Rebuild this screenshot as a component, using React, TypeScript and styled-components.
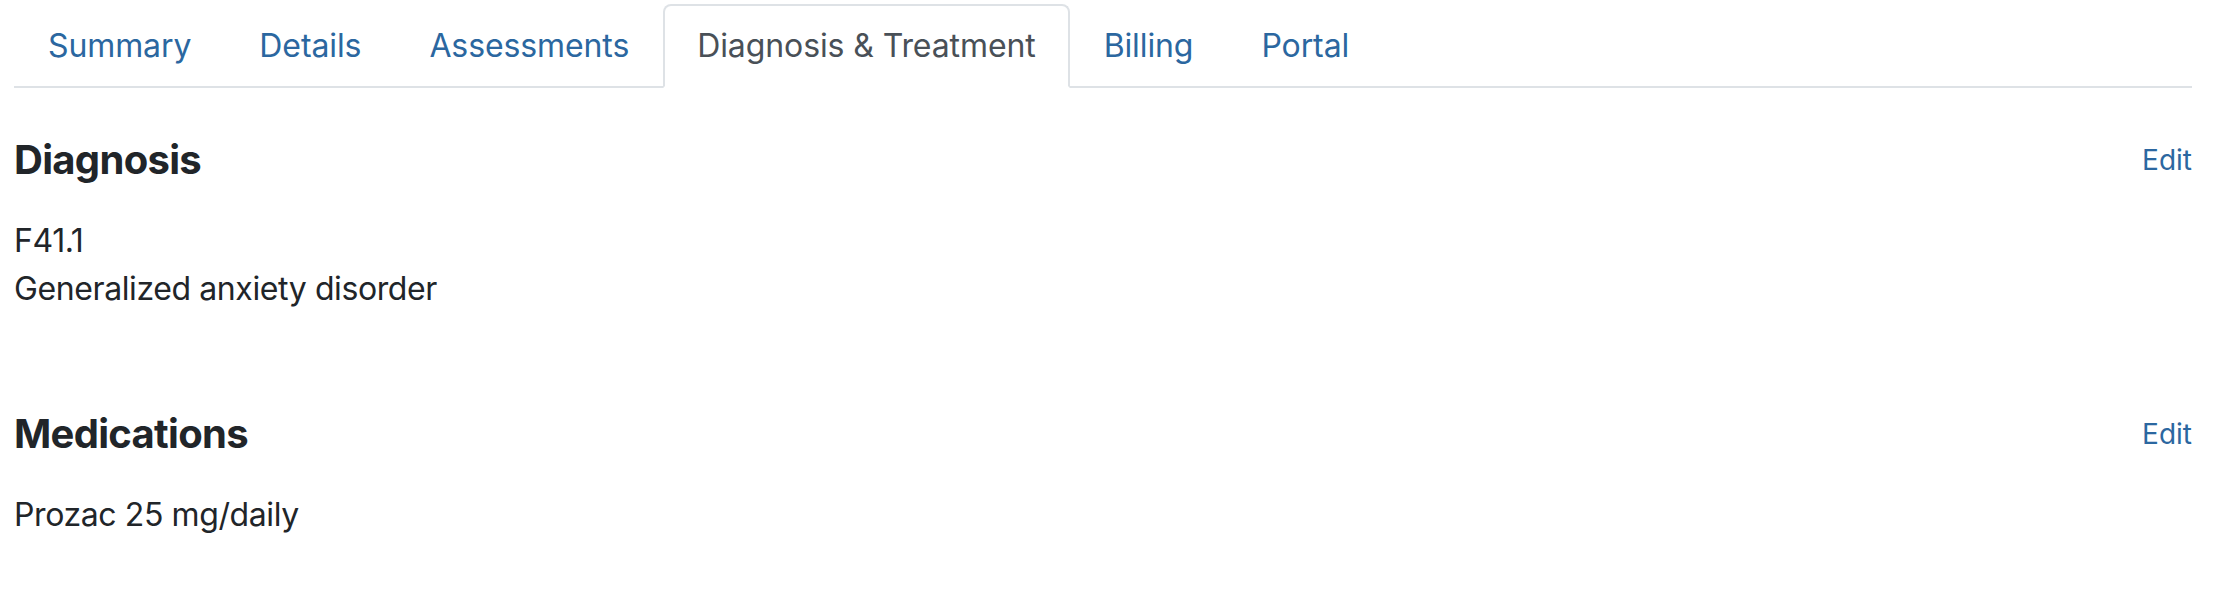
import React, { useState } from 'react'
import styled, { createGlobalStyle } from 'styled-components'

const GlobalStyle = createGlobalStyle`
	body {
		margin: 0;
		padding: 4px 22px 0 14px;
		background: #fff;
		font-family: Inter, 'Noto Sans', sans-serif;
		color: #212529;
	}
`

const tabs = [
	'Summary',
	'Details',
	'Assessments',
	'Diagnosis & Treatment',
	'Billing',
	'Portal',
]

export default function App() {
	const [active, setActive] = useState('Diagnosis & Treatment')

	return (
		<Page>
			<GlobalStyle />
			<TabList>
				{tabs.map((t) => (
					<Tab key={t} active={active === t} onClick={() => setActive(t)}>
						{t}
					</Tab>
				))}
			</TabList>

			<Section>
				<SectionHeader>
					<Title>Diagnosis</Title>
					<EditLink href="#">Edit</EditLink>
				</SectionHeader>
				<Body>
					<Line>F41.1</Line>
					<Line>Generalized anxiety disorder</Line>
				</Body>
			</Section>

			<Section>
				<SectionHeader>
					<Title>Medications</Title>
					<EditLink href="#">Edit</EditLink>
				</SectionHeader>
				<Body>
					<Line>Prozac 25 mg/daily</Line>
				</Body>
			</Section>
		</Page>
	)
}

const Page = styled.div`
	width: 2178px;
`

const TabList = styled.div`
	display: flex;
	border-bottom: 2px solid #dee2e6;
`

const Tab = styled.button<{ active?: boolean }>`
	font-family: inherit;
	font-size: 32px;
	line-height: 48px;
	letter-spacing: -0.1px;
	padding: 16px 32px;
	margin-bottom: -2px;
	background: ${(p) => (p.active ? '#fff' : 'transparent')};
	cursor: pointer;
	border: 2px solid ${(p) => (p.active ? '#dee2e6' : 'transparent')};
	border-bottom-color: ${(p) => (p.active ? '#fff' : 'transparent')};
	border-radius: 8px 8px 0 0;
	color: ${(p) => (p.active ? '#495057' : '#2b67a0')};
`

const Section = styled.section`
	margin-top: 48px;

	& + & {
		margin-top: 97px;
	}
`

const SectionHeader = styled.div`
	display: flex;
	align-items: center;
	justify-content: space-between;
	margin-bottom: 33px;
`

const Title = styled.h5`
	margin: 0;
	font-size: 40px;
	line-height: 48px;
	font-weight: 700;
	letter-spacing: -0.7px;
	color: #212529;
`

const EditLink = styled.a`
	font-size: 28px;
	line-height: 42px;
	color: #2b67a0;
	text-decoration: none;
`

const Body = styled.div`
	font-size: 32px;
	line-height: 48px;
	letter-spacing: -0.4px;
	color: #212529;
`

const Line = styled.div``
